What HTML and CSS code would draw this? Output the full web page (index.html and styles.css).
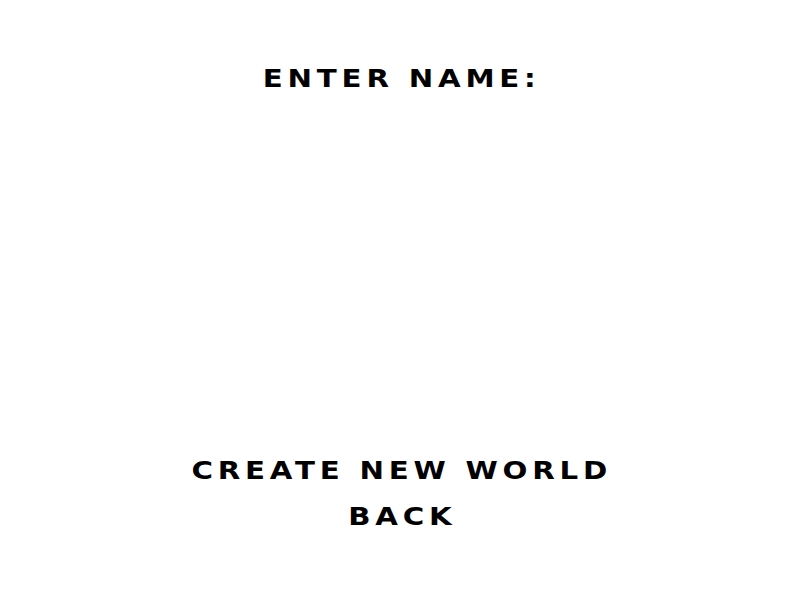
FILE: index.html
```html
<!DOCTYPE html>
<html>
<head>
<meta charset="utf-8">
<link rel="stylesheet" href="styles.css">
</head>
<body>
<div class="screen">
  <div class="title"><span class="wide">ENTER NAME:</span></div>
  <div class="menu">
    <div class="item"><span class="wide">CREATE NEW WORLD</span></div>
    <div class="item"><span class="wide">BACK</span></div>
  </div>
</div>
</body>
</html>
```
FILE: styles.css
```css
html, body {
  margin: 0;
  padding: 0;
  background: #ffffff;
}
.screen {
  width: 800px;
  height: 600px;
  display: flex;
  flex-direction: column;
  align-items: center;
  font-family: "DejaVu Sans", sans-serif;
  font-weight: bold;
  font-size: 25px;
  line-height: 26px;
  color: #000000;
}
.title {
  margin-top: 66px;
}
.menu {
  margin-top: auto;
  margin-bottom: 70px;
  display: flex;
  flex-direction: column;
  align-items: center;
  gap: 20px;
}
.wide {
  display: inline-block;
  letter-spacing: 4.1px;
  margin-right: -4.1px;
  transform: scaleX(1.17);
  white-space: nowrap;
}
```
